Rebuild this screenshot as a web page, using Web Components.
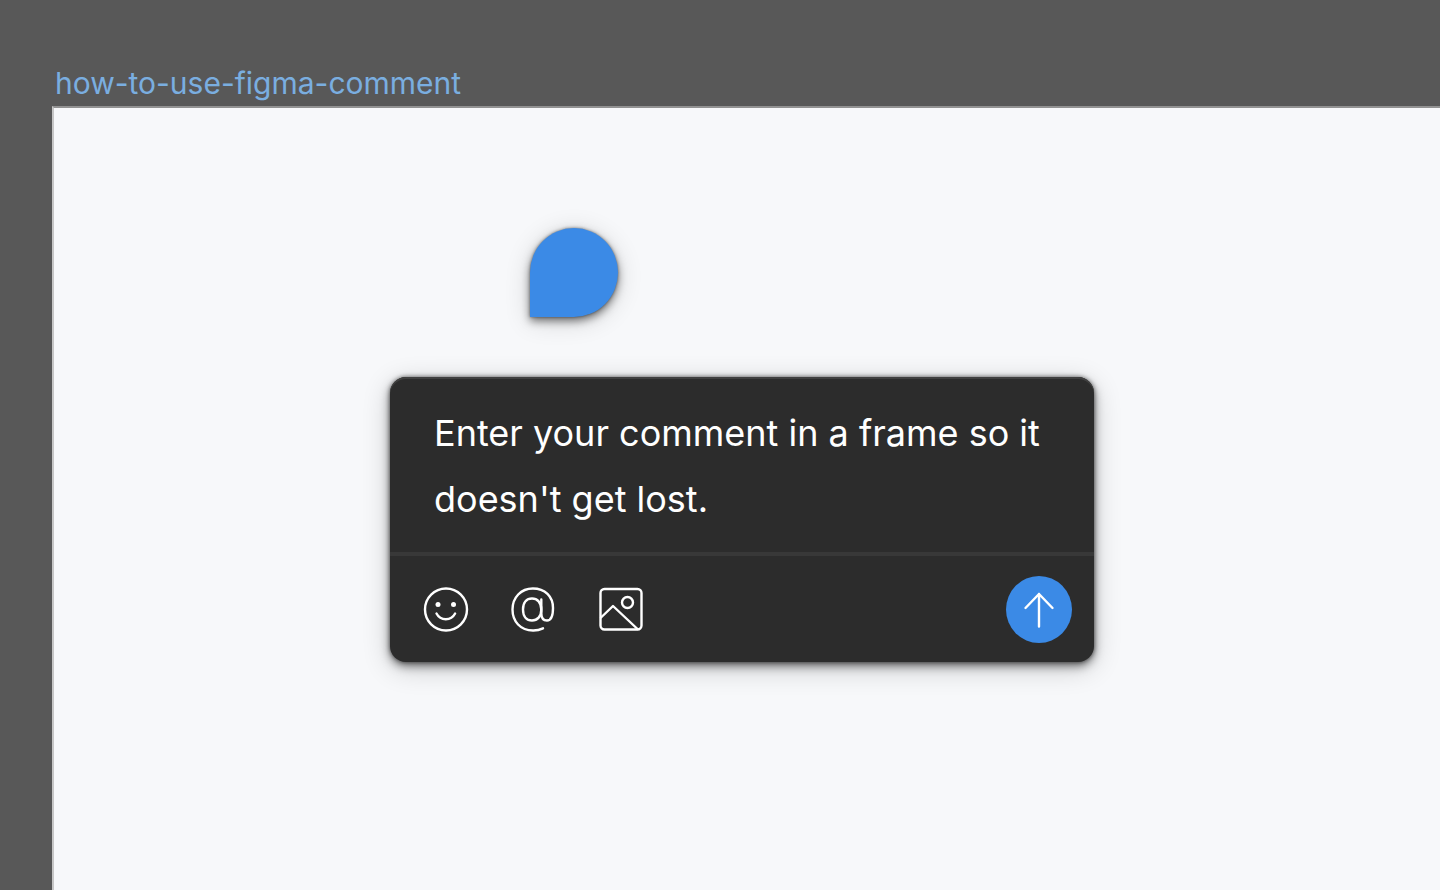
<!DOCTYPE html>
<html lang="en">
<head>
<meta charset="utf-8">
<meta name="viewport" content="width=device-width, initial-scale=1">
<title>how-to-use-figma-comment</title>
<style>
  :root {
    --canvas: #585858;
    --frame: #f7f8fa;
    --panel: #2c2c2c;
    --line: #383838;
    --accent: #3b8ae6;
    --label: #7aaee0;
  }
  html, body { height: 100%; }
  body { margin: 0; overflow: hidden; background: var(--canvas); font-family: Inter, "Liberation Sans", sans-serif; }
</style>
</head>
<body>
<design-frame name="how-to-use-figma-comment">
  <comment-pin></comment-pin>
  <comment-box></comment-box>
</design-frame>

<script>
// Named frame on the canvas; whatever is slotted in sits on the frame surface.
class DesignFrame extends HTMLElement {
  connectedCallback() {
    const root = this.attachShadow({ mode: "open" });
    root.innerHTML = `
      <style>
        :host { display: flex; flex-direction: column; box-sizing: border-box; min-height: 100vh; padding: 63px 0 0 52px; }
        h1 { margin: 0; padding: 0 0 3px 3px; font-size: 30px; line-height: 40px; font-weight: 400; color: var(--label); }
        .surface {
          flex: 1; position: relative; background: var(--frame);
          border-top: 2px solid #929292; border-left: 2px solid #c6c6c6;
        }
      </style>
      <h1>${this.getAttribute("name")}</h1>
      <div class="surface"><slot></slot></div>
    `;
  }
}

// Blue teardrop that marks where the comment is attached.
class CommentPin extends HTMLElement {
  connectedCallback() {
    const root = this.attachShadow({ mode: "open" });
    root.innerHTML = `
      <style>
        :host {
          display: block; position: absolute; left: 476px; top: 120px;
          width: 88px; height: 89px; background: var(--accent);
          border-radius: 50% 50% 50% 0;
          box-shadow: 0 0 3px rgba(0, 0, 0, 0.45), 0 4px 8px rgba(0, 0, 0, 0.5), 0 4px 26px rgba(0, 0, 0, 0.16);
        }
      </style>
    `;
  }
}

// Square toolbar button; the icon is slotted in.
class IconButton extends HTMLElement {
  connectedCallback() {
    const root = this.attachShadow({ mode: "open" });
    root.innerHTML = `
      <style>
        :host { display: block; }
        button {
          display: flex; align-items: center; justify-content: center;
          width: 48px; height: 48px; padding: 0; border: 0; border-radius: 4px;
          background: none; color: #fff; cursor: pointer;
        }
        :host([primary]) button { width: 66px; height: 67px; border-radius: 50%; background: var(--accent); }
        :focus-visible { outline: 2px solid var(--accent); outline-offset: 2px; }
      </style>
      <button type="button" aria-label="${this.getAttribute("label")}"><slot></slot></button>
    `;
  }
}

class CommentBox extends HTMLElement {
  connectedCallback() {
    const root = this.attachShadow({ mode: "open" });
    root.innerHTML = `
      <style>
        :host {
          display: block; position: absolute; left: 336px; top: 269px; width: 704px;
          border-radius: 16px; background: var(--panel);
          box-shadow: inset 0 2px 0 #404040, 0 0 4px rgba(0, 0, 0, 0.55), 0 4px 10px rgba(0, 0, 0, 0.5), 0 6px 28px rgba(0, 0, 0, 0.2);
        }
        textarea {
          display: block; box-sizing: border-box; width: 100%; padding: 23px 44px 20px;
          border: 0; outline: 0; resize: none; overflow: hidden; background: none;
          font: 400 36px/66px Inter, "Liberation Sans", sans-serif; color: #fff;
        }
        .tools { display: flex; align-items: center; gap: 40px; padding: 20px 22px 19px 32px; border-top: 4px solid var(--line); }
        .send { margin-left: auto; }
        svg { display: block; fill: none; stroke: currentColor; stroke-width: 2.4; stroke-linecap: round; stroke-linejoin: round; }
      </style>
      <textarea rows="2" aria-label="Comment" spellcheck="false">Enter your comment in a frame so it doesn't get lost.</textarea>
      <div class="tools">
        <icon-button label="Add emoji">
          <svg width="48" height="48" viewBox="0 0 48 48" aria-hidden="true">
            <circle cx="24" cy="23.5" r="21"/>
            <path d="M14.5 27.5c2 3.8 5.3 5.7 9.3 5.7s7.3-1.9 9.3-5.7"/>
            <g fill="currentColor" stroke="none"><circle cx="16" cy="18.5" r="2.5"/><circle cx="31.500" cy="18.5" r="2.5"/></g>
          </svg>
        </icon-button>
        <icon-button label="Mention someone">
          <svg width="48" height="48" viewBox="0 0 48 48" aria-hidden="true">
            <path d="M33 42.300A22 22 0 0 1 23 44.500C10.500 44.500 2.500 35.500 2.500 23.500S11 2.500 22.800 2.500C35 2.500 43 10.500 43 22C43 30 41.500 34.500 37 34.500S31.300 31 31.300 27V13.500"/>
            <path d="M31.300 23.500C31.300 30.500 27.300 34.500 22 34.500S13 30.500 13 23.500S16.700 12.500 22 12.500S31.300 16.500 31.300 23.500Z"/>
          </svg>
        </icon-button>
        <icon-button label="Attach image">
          <svg width="48" height="48" viewBox="0 0 48 48" aria-hidden="true">
            <rect x="2.500" y="3" width="41" height="40.500" rx="4"/>
            <circle cx="29.500" cy="16.500" r="5.500"/>
            <path d="M3 31.500L15 20L39.500 43"/>
          </svg>
        </icon-button>
        <icon-button class="send" label="Send comment" primary>
          <svg width="48" height="48" viewBox="0 0 48 48" aria-hidden="true">
            <path d="M24 40.500V8M10.500 22L24 8L37.500 22"/>
          </svg>
        </icon-button>
      </div>
    `;
  }
}

customElements.define("design-frame", DesignFrame);
customElements.define("comment-pin", CommentPin);
customElements.define("icon-button", IconButton);
customElements.define("comment-box", CommentBox);
</script>
</body>
</html>
